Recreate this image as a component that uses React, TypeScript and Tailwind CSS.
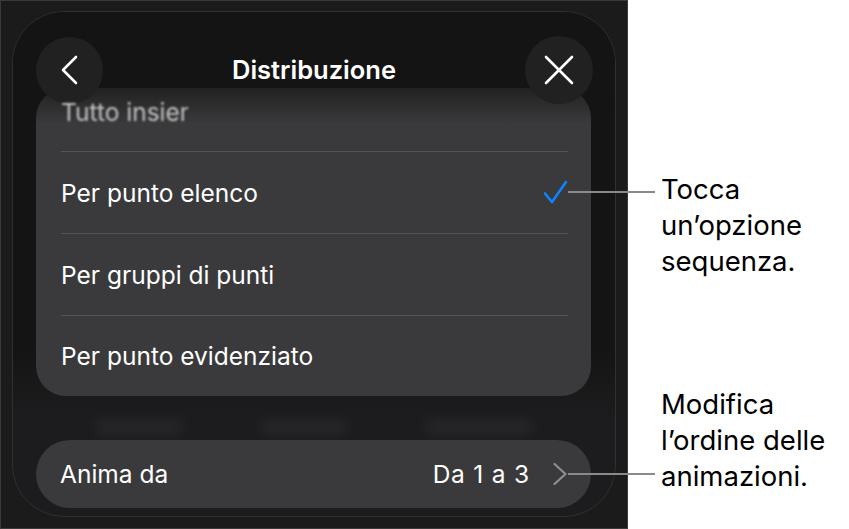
import { ReactNode } from 'react';

const font = { fontFamily: 'Inter, "Noto Sans", sans-serif' };

function Row({ children, right }: { children: ReactNode; right?: ReactNode }) {
  return (
    <div className="flex h-[81px] items-center justify-between pl-[25px] pr-[25px]">
      <span className="text-[24.5px] leading-[30px] text-white">{children}</span>
      {right}
    </div>
  );
}

function Divider() {
  return <div className="ml-[25px] mr-[23px] h-px bg-[#545456]" />;
}

export default function App() {
  return (
    <div className="relative flex h-[529px] w-[849px] bg-white" style={font}>
      {/* device screen */}
      <div className="h-[529px] w-[628px] border border-[#3a3a3a] bg-[#1b1b1b]">
        <div className="relative ml-[11px] mt-[10px] h-[506px] w-[604px] overflow-hidden rounded-[52px] border border-[#303030] bg-gradient-to-b from-[#141414] from-[66%] to-[#1c1c1e] to-[80%] pl-[23px] pr-[24px]">
          <div className="mt-[76px] h-[308px] overflow-hidden rounded-[30px] bg-[#3a3a3c]">
            <div className="h-[63px] pl-[25px] pt-[9px]">
              <div className="relative z-10 w-[127px] overflow-hidden whitespace-nowrap text-[24.5px] leading-[30px] text-[#c4c4c4] blur-[1px]">
                Tutto insieme
              </div>
            </div>
            <Divider />
            <Row
              right={
                <svg width="26" height="26" viewBox="0 0 26 26" fill="none" className="mr-[-2px]">
                  <path d="M3 13.5 L10 22 L24 2" stroke="#0a84ff" strokeWidth="2.6" strokeLinecap="round" strokeLinejoin="round" />
                </svg>
              }
            >
              Per punto elenco
            </Row>
            <Divider />
            <Row>Per gruppi di punti</Row>
            <Divider />
            <div className="flex h-[80px] items-center pl-[25px]">
              <span className="text-[24.5px] leading-[30px] text-white">Per punto evidenziato</span>
            </div>
          </div>

          {/* blurred toolbar showing through */}
          <div className="flex h-[44px] items-end justify-around px-[20px] pb-[4px]">
            <div className="h-[18px] w-[90px] rounded-full bg-white/[0.04] blur-[6px]" />
            <div className="h-[18px] w-[90px] rounded-full bg-white/[0.04] blur-[6px]" />
            <div className="h-[18px] w-[110px] rounded-full bg-white/[0.04] blur-[6px]" />
          </div>

          <div className="flex h-[68px] items-center justify-between rounded-full bg-[#3a3a3c] pl-[24px] pr-[24px]">
            <span className="text-[24.5px] leading-[30px] text-white">Anima da</span>
            <div className="flex items-center gap-[23px]">
              <span className="text-[24.5px] leading-[30px] tracking-[0.8px] text-white">Da 1 a 3</span>
              <svg width="14" height="22" viewBox="0 0 14 22" fill="none">
                <path d="M1.5 1 L12.5 11 L1.5 21" stroke="#8e8e93" strokeWidth="2.2" strokeLinecap="round" strokeLinejoin="round" />
              </svg>
            </div>
          </div>

          {/* header fade over the scrolled list */}
          <div className="pointer-events-none absolute inset-x-0 top-0 h-[112px] bg-gradient-to-b from-[#141414] from-50% to-transparent" />

          <div className="absolute inset-x-0 top-[24px] flex items-center justify-between pl-[23px] pr-[22px]">
            <button type="button" className="flex h-[67px] w-[67px] items-center justify-center rounded-full bg-[#212121]">
              <svg width="18" height="30" viewBox="0 0 18 30" fill="none">
                <path d="M15 2 L2 15 L15 28" stroke="white" strokeWidth="2.6" strokeLinecap="round" strokeLinejoin="round" />
              </svg>
            </button>
            <span className="text-[25.5px] font-semibold text-white">Distribuzione</span>
            <button type="button" className="flex h-[68px] w-[68px] items-center justify-center rounded-full bg-[#212121]">
              <svg width="30" height="30" viewBox="0 0 30 30" fill="none">
                <path d="M2 2 L28 28 M28 2 L2 28" stroke="white" strokeWidth="2.6" strokeLinecap="round" />
              </svg>
            </button>
          </div>
        </div>
      </div>

      {/* callouts */}
      <div className="flex flex-1 flex-col pl-[33px] pt-[171px] text-[27.5px] leading-[36px] text-black">
        <p>
          Tocca
          <br />
          un’opzione
          <br />
          sequenza.
        </p>
        <p className="mt-[107px]">
          Modifica
          <br />
          l’ordine delle
          <br />
          animazioni.
        </p>
      </div>

      <div className="absolute left-[568px] top-[191px] h-[2px] w-[87px] bg-[#8a8a8a]" />
      <div className="absolute left-[568px] top-[473px] h-[2px] w-[87px] bg-[#8a8a8a]" />
    </div>
  );
}
